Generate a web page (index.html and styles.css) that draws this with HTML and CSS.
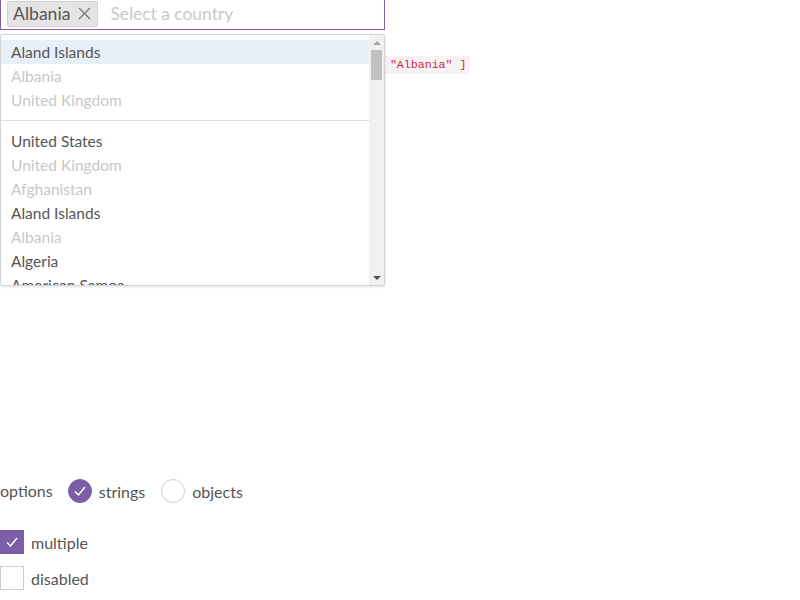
FILE: index.html
```html
<!DOCTYPE html>
<html>
<head>
<meta charset="utf-8">
<link rel="stylesheet" href="styles.css">
</head>
<body>
<div class="demo">
  <div class="select-wrap">
    <div class="select-box">
      <span class="tag">Albania<span class="tag-x">
        <svg width="13" height="13" viewBox="0 0 13 13"><path d="M1 1L12 12M12 1L1 12" stroke="#777" stroke-width="1.3" fill="none"/></svg>
      </span></span>
      <span class="placeholder">Select a country</span>
    </div>
    <div class="dropdown">
      <div class="list">
        <div class="group">
          <div class="opt hl">Aland Islands</div>
          <div class="opt dis">Albania</div>
          <div class="opt dis">United Kingdom</div>
        </div>
        <div class="group">
          <div class="opt">United States</div>
          <div class="opt dis">United Kingdom</div>
          <div class="opt dis">Afghanistan</div>
          <div class="opt">Aland Islands</div>
          <div class="opt dis">Albania</div>
          <div class="opt">Algeria</div>
          <div class="opt">American Samoa</div>
        </div>
      </div>
      <div class="scrollbar">
        <div class="arrow up"></div>
        <div class="track"><div class="thumb"></div></div>
        <div class="arrow down"></div>
      </div>
    </div>
  </div>
  <div class="output"><code class="code">[ "Albania" ]</code></div>
</div>

<div class="controls">
  <div class="row radios">
    <span class="label">options</span>
    <span class="radio on"><svg width="14" height="12" viewBox="0 0 14 12"><path d="M2 6.5L5.5 10L12 2" stroke="#fff" stroke-width="1.5" fill="none"/></svg></span>
    <span class="rlabel">strings</span>
    <span class="radio second"></span>
    <span class="rlabel">objects</span>
  </div>
  <div class="row check-row first">
    <span class="check on"><svg width="14" height="12" viewBox="0 0 14 12"><path d="M2 6.5L5.5 10L12 2" stroke="#fff" stroke-width="1.5" fill="none"/></svg></span>
    <span class="clabel">multiple</span>
  </div>
  <div class="row check-row">
    <span class="check"></span>
    <span class="clabel">disabled</span>
  </div>
</div>
</body>
</html>
```
FILE: styles.css
```css
html, body {
  margin: 0;
  padding: 0;
  background: #fff;
}
body {
  font-family: Lato, "Noto Sans", sans-serif;
  color: #555;
  width: 800px;
  height: 600px;
  overflow: hidden;
}
.demo {
  display: flex;
  align-items: flex-start;
  margin-top: -1px;
  height: 480px;
}
.select-wrap {
  position: relative;
  width: 385px;
  flex: none;
}
.select-box {
  box-sizing: border-box;
  width: 385px;
  height: 31px;
  border: 1px solid #7e5fa8;
  padding: 0 6px;
  display: flex;
  align-items: center;
  gap: 12px;
}
.tag {
  display: inline-flex;
  align-items: center;
  box-sizing: border-box;
  height: 26px;
  margin-top: -2px;
  padding: 0 6px 0 5px;
  background: #e4e4e4;
  border: 1px solid #d0d0d0;
  border-radius: 2px;
  font-size: 17.6px;
  color: #555;
}
.tag-x {
  display: inline-flex;
  margin-left: 8px;
}
.placeholder {
  font-size: 17.4px;
  color: #c8c8c8;
  margin-top: -2px;
}
.dropdown {
  position: absolute;
  top: 35px;
  left: 0;
  width: 385px;
  height: 252px;
  box-sizing: border-box;
  border: 1px solid #d4d4d4;
  border-radius: 2px;
  box-shadow: 0 1px 3px rgba(0,0,0,0.12);
  background: #fff;
  display: flex;
  overflow: hidden;
}
.list {
  flex: 1;
  padding-top: 5px;
  overflow: hidden;
}
.group {
  padding-bottom: 8px;
  border-bottom: 1px solid #ddd;
  margin-bottom: 8px;
}
.group:last-child {
  border-bottom: none;
}
.opt {
  height: 24px;
  line-height: 24px;
  padding-left: 10px;
  font-size: 15.5px;
  color: #555;
  white-space: nowrap;
}
.opt.hl {
  background: #e7f0f9;
}
.opt.dis {
  color: #c8c8c8;
}
.scrollbar {
  width: 15px;
  flex: none;
  background: #f1f1f1;
  display: flex;
  flex-direction: column;
}
.arrow {
  height: 15px;
  display: flex;
  align-items: center;
  justify-content: center;
}
.arrow.up::after {
  content: "";
  border-left: 4px solid transparent;
  border-right: 4px solid transparent;
  border-bottom: 4px solid #a3a3a3;
}
.arrow.down::after {
  content: "";
  border-left: 4px solid transparent;
  border-right: 4px solid transparent;
  border-top: 4px solid #505050;
}
.track {
  flex: 1;
  padding: 0 2px;
}
.thumb {
  height: 30px;
  background: #c1c1c1;
}
.output {
  margin-top: 53px;
  margin-left: -13px;
}
.code {
  font-family: "Liberation Mono", monospace;
  font-size: 11.6px;
  line-height: 14px;
  display: inline-block;
  color: #c7254e;
  background: #f9f2f4;
  padding: 2px 4px;
  border-radius: 3px;
}
.controls {
  font-size: 16px;
}
.row {
  display: flex;
  align-items: center;
  height: 24px;
}
.label {
  margin-right: 15px;
  margin-top: -2px;
}
.radio {
  box-sizing: border-box;
  width: 24px;
  height: 24px;
  border-radius: 50%;
  border: 1px solid #ccc;
  display: inline-flex;
  align-items: center;
  justify-content: center;
}
.radio.second {
  margin-left: 1px;
}
.radio.on {
  background: #7b5ea7;
  border-color: #7b5ea7;
}
.rlabel {
  margin-left: 7px;
  margin-right: 15px;
}
.check-row.first {
  margin-top: 27px;
}
.check-row {
  margin-top: 12px;
}
.check {
  box-sizing: border-box;
  width: 24px;
  height: 24px;
  border: 1px solid #ccc;
  display: inline-flex;
  align-items: center;
  justify-content: center;
}
.check.on {
  background: #7b5ea7;
  border-color: #7b5ea7;
}
.clabel {
  margin-left: 7px;
}
```
